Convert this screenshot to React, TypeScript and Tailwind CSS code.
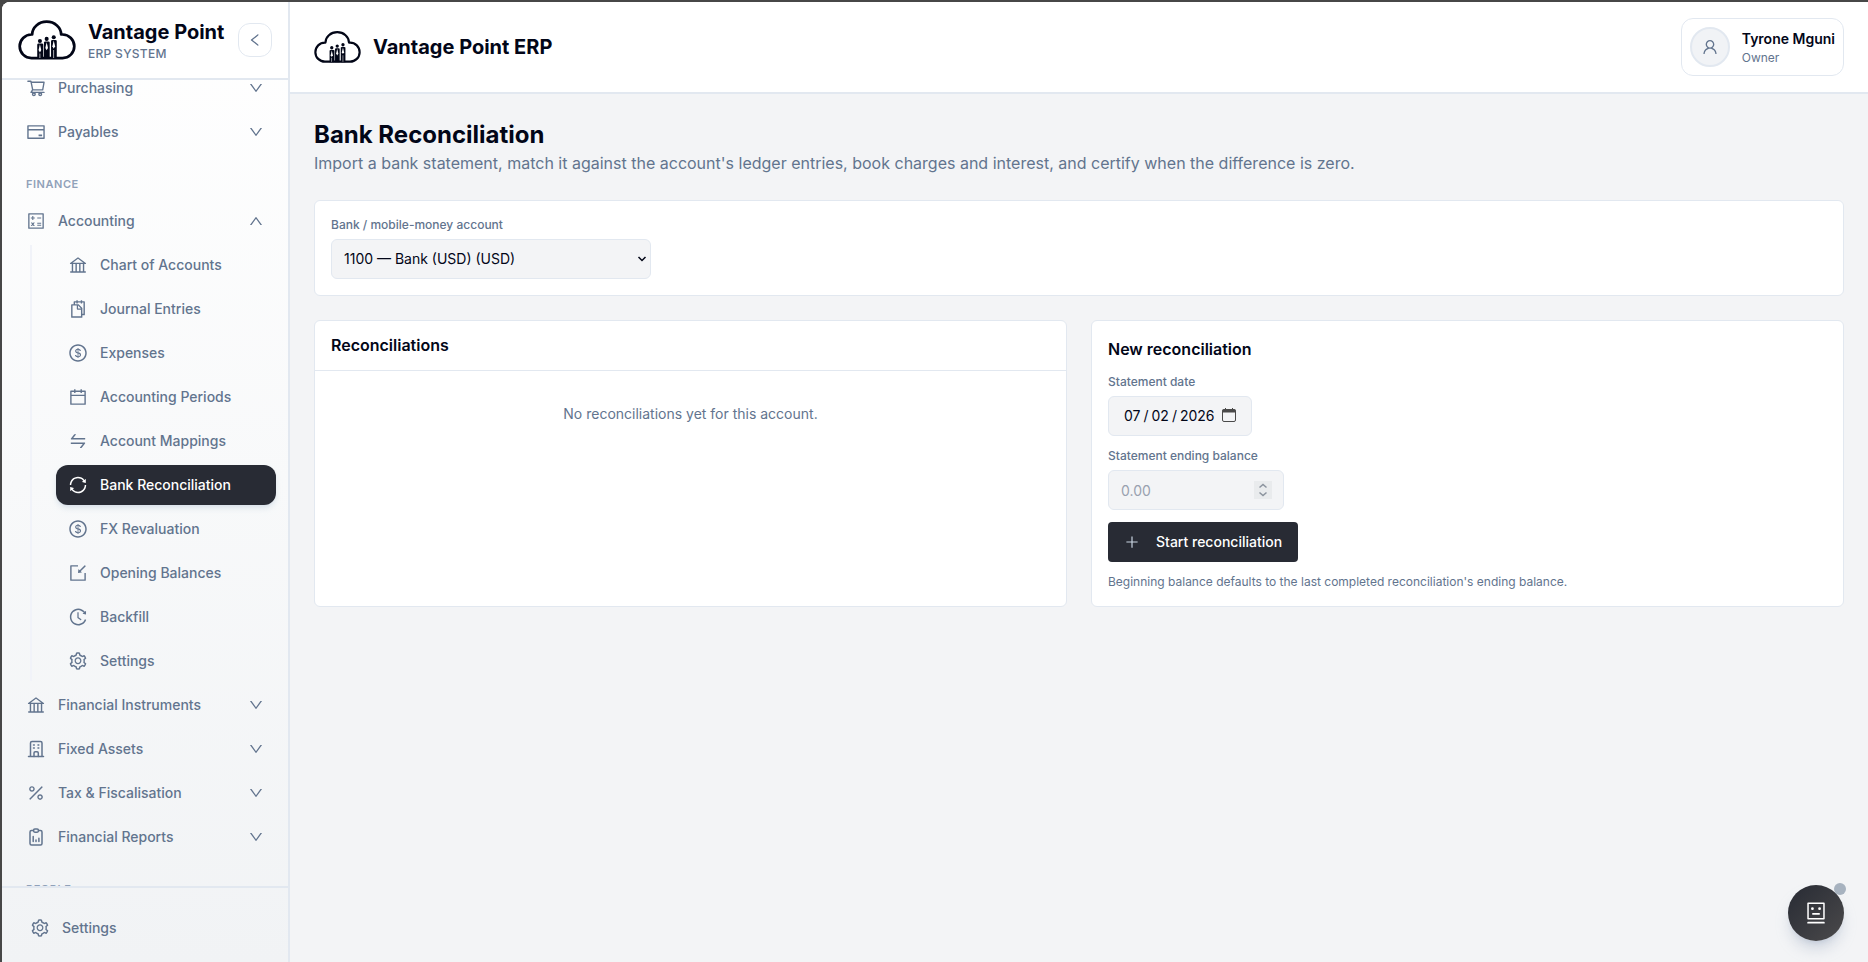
import { useState, type ComponentType } from 'react';
import {
  AiOutlineBank,
  AiOutlineCalculator,
  AiOutlineCalendar,
  AiOutlineCreditCard,
  AiOutlineDollarCircle,
  AiOutlineDown,
  AiOutlineHistory,
  AiOutlineImport,
  AiOutlineLeft,
  AiOutlinePercentage,
  AiOutlinePlus,
  AiOutlineRobot,
  AiOutlineSetting,
  AiOutlineShoppingCart,
  AiOutlineSnippets,
  AiOutlineSwap,
  AiOutlineSync,
  AiOutlineUp,
  AiOutlineUser,
} from 'react-icons/ai';
import { clsx } from 'clsx';

type Icon = ComponentType<{ className?: string }>;

type NavItem = {
  label: string;
  icon: Icon;
  children?: { label: string; icon: Icon }[];
};

function BuildingIcon({ className }: { className?: string }) {
  return (
    <svg viewBox="0 0 20 20" fill="none" stroke="currentColor" strokeWidth="1.5" strokeLinecap="round" className={className}>
      <path d="M2.5 17.5h15M4.5 17.5V4A1.500 1.500 0 0 1 6 2.500h8.500A1.500 1.500 0 0 1 16 4v13.500" />
      <path d="M8 17.500V14a1.200 1.200 0 0 1 1.200-1.200h1.900a1.200 1.200 0 0 1 1.200 1.200v3.500" />
      <path d="M7.500 6h.8M12 6h.8M7.500 9h.8M12 9h.8" />
    </svg>
  );
}

function ReportIcon({ className }: { className?: string }) {
  return (
    <svg viewBox="0 0 20 20" fill="none" stroke="currentColor" strokeWidth="1.5" strokeLinecap="round" strokeLinejoin="round" className={className}>
      <path d="M7.500 3.500h-2A1.500 1.500 0 0 0 4 5v11.500A1.500 1.500 0 0 0 5.500 18h9a1.500 1.500 0 0 0 1.500-1.500V5a1.500 1.500 0 0 0-1.500-1.500h-2" />
      <rect x="7.5" y="2" width="5" height="3.2" rx="1.4" />
      <path d="M7.200 9.500v5M10 13v1.500M12.900 11.200v3.300" />
    </svg>
  );
}

function Logo({ className }: { className?: string }) {
  return (
    <svg viewBox="56 58 172 124" fill="#020617" className={className} aria-hidden="true">
      <path
        d="M96 174A35 35 0 0 1 96 104L98 104A43 38 0 0 1 184 104L188 104A35 35 0 0 1 188 174Z"
        fill="none"
        stroke="#020617"
        strokeWidth="8"
        strokeLinejoin="round"
      />
      <circle cx="121" cy="123" r="6" />
      <circle cx="141" cy="117" r="6" />
      <circle cx="162" cy="112" r="6" />
      <path d="M113 134q0-3 4-3h10q4 0 4 3v42h-18z" />
      <path d="M133 128q0-3 4-3h9q4 0 4 3v48h-17z" />
      <path d="M154 123q0-3 4-3h9q4 0 4 3v53h-17z" />
      <g fill="#fff">
        <path d="M121 133l4 17-4 7-4-7z" />
        <path d="M141 127l4 17-4 7-4-7z" />
        <path d="M162 122l4 17-4 7-4-7z" />
        <path d="M120 160h2v14h-2zM161 150h2v24h-2z" />
      </g>
    </svg>
  );
}

const operations: NavItem[] = [
  { label: 'Purchasing', icon: AiOutlineShoppingCart },
  { label: 'Payables', icon: AiOutlineCreditCard },
];

const finance: NavItem[] = [
  {
    label: 'Accounting',
    icon: AiOutlineCalculator,
    children: [
      { label: 'Chart of Accounts', icon: AiOutlineBank },
      { label: 'Journal Entries', icon: AiOutlineSnippets },
      { label: 'Expenses', icon: AiOutlineDollarCircle },
      { label: 'Accounting Periods', icon: AiOutlineCalendar },
      { label: 'Account Mappings', icon: AiOutlineSwap },
      { label: 'Bank Reconciliation', icon: AiOutlineSync },
      { label: 'FX Revaluation', icon: AiOutlineDollarCircle },
      { label: 'Opening Balances', icon: AiOutlineImport },
      { label: 'Backfill', icon: AiOutlineHistory },
      { label: 'Settings', icon: AiOutlineSetting },
    ],
  },
  { label: 'Financial Instruments', icon: AiOutlineBank },
  { label: 'Fixed Assets', icon: BuildingIcon },
  { label: 'Tax & Fiscalisation', icon: AiOutlinePercentage },
  { label: 'Financial Reports', icon: ReportIcon },
];

function NavGroup({ item, active }: { item: NavItem; active: string }) {
  const [open, setOpen] = useState(Boolean(item.children));
  const Chevron = open ? AiOutlineUp : AiOutlineDown;

  return (
    <li>
      <button
        type="button"
        aria-expanded={open}
        onClick={() => setOpen(!open)}
        className="flex h-10 w-full items-center gap-3 rounded-xl px-3 text-left"
      >
        <item.icon className="size-5 shrink-0" />
        <span className="flex-1">{item.label}</span>
        <Chevron className="size-4" />
      </button>
      {open && item.children && (
        <ul className="mt-1 ml-4 space-y-1 border-l-2 border-[#f1f3f9] pl-6">
          {item.children.map((child) => (
            <li key={child.label}>
              <a
                href="#"
                className={clsx(
                  'flex h-10 items-center gap-3 rounded-xl px-3',
                  child.label === active && 'bg-[#282b34] text-white shadow-md shadow-slate-300/60'
                )}
              >
                <child.icon className="size-5 shrink-0" />
                {child.label}
              </a>
            </li>
          ))}
        </ul>
      )}
    </li>
  );
}

function SectionLabel({ children }: { children: string }) {
  return (
    <h2 className="mt-6 mb-[9px] px-3 text-[11px] leading-4 font-semibold tracking-wider text-slate-400">{children}</h2>
  );
}

function Sidebar() {
  return (
    <aside className="flex w-72 shrink-0 flex-col border-r-2 border-slate-200 bg-linear-to-b from-white to-[#f1f3f5]">
      <div className="flex items-center border-b-2 border-slate-200 bg-white p-4">
        <Logo className="w-[58px] shrink-0" />
        <div className="ml-3 flex-1 whitespace-nowrap">
          <p className="text-xl leading-7 font-bold text-slate-950">Vantage Point</p>
          <p className="text-xs font-medium tracking-wide text-slate-500">ERP SYSTEM</p>
        </div>
        <button
          type="button"
          aria-label="Collapse sidebar"
          className="flex size-[34px] shrink-0 items-center justify-center rounded-xl border border-slate-200 text-slate-500"
        >
          <AiOutlineLeft className="size-4" />
        </button>
      </div>

      <nav className="min-h-0 flex-1 overflow-hidden px-3 text-sm font-medium text-slate-500">
        <ul className="-mt-3 space-y-1">
          {operations.map((item) => (
            <NavGroup key={item.label} item={item} active="Bank Reconciliation" />
          ))}
        </ul>
        <SectionLabel>FINANCE</SectionLabel>
        <ul className="space-y-1">
          {finance.map((item) => (
            <NavGroup key={item.label} item={item} active="Bank Reconciliation" />
          ))}
        </ul>
        <SectionLabel>PEOPLE</SectionLabel>
      </nav>

      <div className="border-t-2 border-slate-200 px-4 pt-[18px] pb-3">
        <a href="#" className="flex h-11 items-center gap-3 px-3 text-sm font-medium text-slate-500">
          <AiOutlineSetting className="size-5" />
          Settings
        </a>
      </div>
    </aside>
  );
}

function Header() {
  return (
    <header className="flex items-center justify-between border-b-2 border-slate-200 bg-white px-6 py-4">
      <div className="flex items-center gap-3">
        <Logo className="w-[47px]" />
        <span className="text-xl font-bold text-slate-950">Vantage Point ERP</span>
      </div>
      <button type="button" className="flex items-center gap-3 rounded-xl border border-slate-200 p-2 text-left">
        <span className="flex size-10 items-center justify-center rounded-full border-2 border-slate-200 bg-[#f1f3f6] text-slate-500">
          <AiOutlineUser className="size-[18px]" />
        </span>
        <span>
          <span className="block text-sm leading-[22px] font-semibold text-slate-950">Tyrone Mguni</span>
          <span className="block text-xs text-slate-500">Owner</span>
        </span>
      </button>
    </header>
  );
}

const field = 'block h-10 rounded-md border border-slate-200 bg-[#f3f4f6] text-sm text-slate-950';
const fieldLabel = 'mb-1.5 block text-xs font-medium text-slate-500';
const card = 'rounded-md border border-slate-200 bg-white';

export default function App() {
  const [account, setAccount] = useState('1100');
  const [date, setDate] = useState('2026-07-02');
  const [balance, setBalance] = useState('');

  return (
    <div className="h-screen bg-[#474747] pt-0.5 pl-0.5 font-['Inter',sans-serif]">
      <div className="flex h-full overflow-hidden rounded-tl-lg bg-[#f3f4f6]">
        <Sidebar />

        <div className="flex min-w-0 flex-1 flex-col">
          <Header />

          <main className="flex-1 space-y-6 px-6 pt-[25px] pb-6">
            <div>
              <h1 className="text-2xl font-bold text-slate-950">Bank Reconciliation</h1>
              <p className="text-base leading-[25px] text-slate-500">
                Import a bank statement, match it against the account's ledger entries, book charges and interest, and
                certify when the difference is zero.
              </p>
            </div>

            <section className={clsx(card, 'p-4')}>
              <label htmlFor="account" className={fieldLabel}>
                Bank / mobile-money account
              </label>
              <div className="relative w-80">
                <select
                  id="account"
                  value={account}
                  onChange={(e) => setAccount(e.target.value)}
                  className={clsx(field, 'w-full appearance-none pr-6 pl-3')}
                >
                  <option value="1100">1100 — Bank (USD) (USD)</option>
                </select>
                <svg
                  viewBox="0 0 10 10"
                  fill="none"
                  stroke="#020617"
                  strokeWidth="1.5"
                  className="pointer-events-none absolute top-[15px] right-1 size-2.5"
                >
                  <path d="M1.500 3L5 6.500 8.500 3" />
                </svg>
              </div>
            </section>

            <div className="grid grid-cols-2 gap-6">
              <section className={card}>
                <h2 className="border-b border-slate-200 px-4 py-3 text-base leading-[25px] font-semibold text-slate-950">
                  Reconciliations
                </h2>
                <p className="p-8 text-center text-sm leading-[22px] text-slate-500">
                  No reconciliations yet for this account.
                </p>
              </section>

              <section className={clsx(card, 'space-y-3 p-4')}>
                <h2 className="text-base leading-[25px] font-semibold text-slate-950">New reconciliation</h2>
                <div>
                  <label htmlFor="date" className={fieldLabel}>
                    Statement date
                  </label>
                  <div className="relative w-36">
                    <input
                      id="date"
                      type="date"
                      value={date}
                      onChange={(e) => setDate(e.target.value)}
                      className={clsx(
                        field,
                        'w-full pr-3 pl-3.5 [&::-webkit-calendar-picker-indicator]:opacity-0 [&::-webkit-calendar-picker-indicator]:ml-0 [&::-webkit-datetime-edit-text]:px-0.5'
                      )}
                    />
                    <svg
                      viewBox="0 0 14 14"
                      fill="none"
                      stroke="#4a4a4a"
                      className="pointer-events-none absolute top-3 right-4 size-3.5"
                    >
                      <rect x="0.5" y="1.5" width="13" height="12" rx="1.5" />
                      <path d="M0.500 3h13" strokeWidth="3" />
                      <path d="M3.500 0v2M10.500 0v2" />
                    </svg>
                  </div>
                </div>
                <div>
                  <label htmlFor="balance" className={fieldLabel}>
                    Statement ending balance
                  </label>
                  <div className="relative w-44">
                    <input
                      id="balance"
                      type="number"
                      step="0.01"
                      placeholder="0.00"
                      value={balance}
                      onChange={(e) => setBalance(e.target.value)}
                      className={clsx(
                        field,
                        'w-full px-3 placeholder:text-gray-400 [&::-webkit-inner-spin-button]:opacity-0'
                      )}
                    />
                    <svg
                      viewBox="0 0 18 18"
                      fill="none"
                      stroke="#8b939e"
                      strokeWidth="1.5"
                      className="pointer-events-none absolute top-[11px] right-3 size-[18px] bg-[#e9ebed]"
                    >
                      <path d="M5.500 6.500L9 3.500l3.500 3M5.500 11.500l3.500 3 3.500-3" />
                    </svg>
                  </div>
                </div>
                <button
                  type="button"
                  className="flex h-10 items-center gap-4 rounded-sm bg-[#282b34] px-4 text-sm font-medium text-white"
                >
                  <AiOutlinePlus className="size-4 text-slate-300" />
                  Start reconciliation
                </button>
                <p className="text-xs text-slate-500">
                  Beginning balance defaults to the last completed reconciliation's ending balance.
                </p>
              </section>
            </div>
          </main>
        </div>
      </div>

      {/* Assistant launcher */}
      <button
        type="button"
        aria-label="Open assistant"
        className="fixed right-6 bottom-[21px] flex size-14 items-center justify-center rounded-full bg-linear-to-br from-[#282b34] to-[#4b4a4b] text-white shadow-lg shadow-slate-400/40"
      >
        <AiOutlineRobot className="size-6" />
        <span className="absolute -top-0.5 -right-0.5 size-3 rounded-full bg-[#a7b2bf]" />
      </button>
    </div>
  );
}
